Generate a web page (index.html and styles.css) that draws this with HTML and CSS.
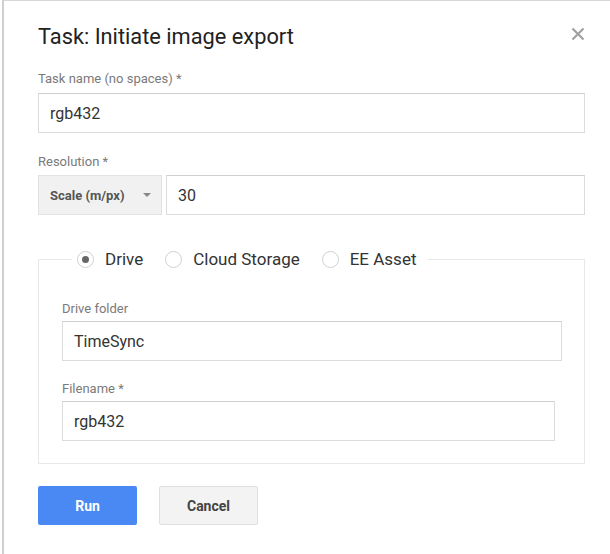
FILE: index.html
```html
<!DOCTYPE html>
<html>
<head>
<meta charset="utf-8">
<link rel="stylesheet" href="styles.css">
</head>
<body>
<div class="dialog">
  <div class="header">
    <h1 class="title">Task: Initiate image export</h1>
    <span class="close"><svg width="14" height="14" viewBox="0 0 14 14"><path d="M1.5 1.5 L12.5 12.5 M12.5 1.5 L1.5 12.5" stroke="#a0a0a0" stroke-width="2.2" fill="none"/></svg></span>
  </div>
  <div class="label">Task name (no spaces) *</div>
  <div class="input">rgb432</div>
  <div class="label second">Resolution *</div>
  <div class="res-row">
    <div class="select">Scale (m/px) <span class="caret"></span></div>
    <div class="input grow">30</div>
  </div>
  <fieldset class="dest">
    <legend class="radios">
      <span class="radio checked"></span><span class="rlabel">Drive</span>
      <span class="radio"></span><span class="rlabel">Cloud Storage</span>
      <span class="radio"></span><span class="rlabel">EE Asset</span>
    </legend>
    <div class="label first">Drive folder</div>
    <div class="input folder">TimeSync</div>
    <div class="label second">Filename *</div>
    <div class="input filename">rgb432</div>
  </fieldset>
  <div class="buttons">
    <div class="btn run">Run</div>
    <div class="btn cancel">Cancel</div>
  </div>
</div>
</body>
</html>
```

FILE: styles.css
```css
html, body {
  margin: 0;
  padding: 0;
  background: #ffffff;
}
body {
  font-family: Roboto, "Liberation Sans", sans-serif;
  width: 610px;
  height: 554px;
  overflow: hidden;
}
.dialog {
  margin-left: 2px;
  border-left: 2px solid #cfcfcf;
  border-top: 1px solid #d8d8d8;
  height: 560px;
  padding: 24px 25px 0 34px;
  box-sizing: border-box;
}
.header {
  display: flex;
  justify-content: space-between;
  align-items: center;
  height: 24px;
}
.title {
  margin: 0;
  font-size: 21.8px;
  font-weight: 400;
  line-height: 24px;
  color: #222;
}
.close {
  display: flex;
  margin-right: 0;
  margin-top: -7px;
}
.label {
  font-size: 13px;
  line-height: 16px;
  color: #7a7a7a;
  margin-top: 22px;
  margin-bottom: 6px;
}
.label.second {
  margin-top: 21px;
  margin-bottom: 5px;
}
.input {
  height: 40px;
  box-sizing: border-box;
  border: 1px solid #dcdcdc;
  border-top-color: #cfcfcf;
  padding: 0 11px;
  display: flex;
  align-items: center;
  font-size: 16px;
  color: #333;
  background: #fff;
}
.res-row {
  display: flex;
  gap: 4px;
}
.select {
  width: 124px;
  height: 40px;
  box-sizing: border-box;
  background: #f1f1f1;
  border: 1px solid #e2e2e2;
  display: flex;
  align-items: center;
  justify-content: space-between;
  padding: 0 10px 0 11px;
  font-size: 13px;
  font-weight: 700;
  color: #555;
}
.caret {
  width: 0;
  height: 0;
  border-left: 4px solid transparent;
  border-right: 4px solid transparent;
  border-top: 4px solid #888;
}
.grow {
  flex: 1;
}
.dest {
  margin: 33px 0 0 0;
  border: 1px solid #e8e8e8;
  padding: 22px 22px 22px 23px;
  min-width: 0;
}
.radios {
  margin-left: 10px;
  padding: 0 12px 0 5px;
  display: flex;
  align-items: center;
  height: 22px;
}
.radio {
  width: 17px;
  height: 17px;
  box-sizing: border-box;
  border: 1px solid #cfcfcf;
  border-radius: 50%;
  display: inline-flex;
  align-items: center;
  justify-content: center;
  margin-right: 11px;
}
.radio.checked::after {
  content: "";
  width: 7px;
  height: 7px;
  border-radius: 50%;
  background: #666;
}
.rlabel {
  font-size: 17px;
  color: #333;
  margin-right: 22px;
}
.rlabel:last-child {
  margin-right: 0;
}
.dest .label.first {
  margin-top: 9px;
  margin-bottom: 4px;
}
.dest .label.second {
  margin-top: 20px;
  margin-bottom: 4px;
}
.filename {
  margin-right: 7px;
}
.buttons {
  display: flex;
  gap: 22px;
  margin-top: 22px;
}
.btn {
  width: 99px;
  height: 39px;
  box-sizing: border-box;
  display: flex;
  align-items: center;
  justify-content: center;
  font-size: 14px;
  font-weight: 700;
  border-radius: 2px;
}
.run {
  background: #4a89f3;
  color: #fff;
}
.cancel {
  background: #f3f3f3;
  border: 1px solid #e0e0e0;
  color: #444;
}
```
